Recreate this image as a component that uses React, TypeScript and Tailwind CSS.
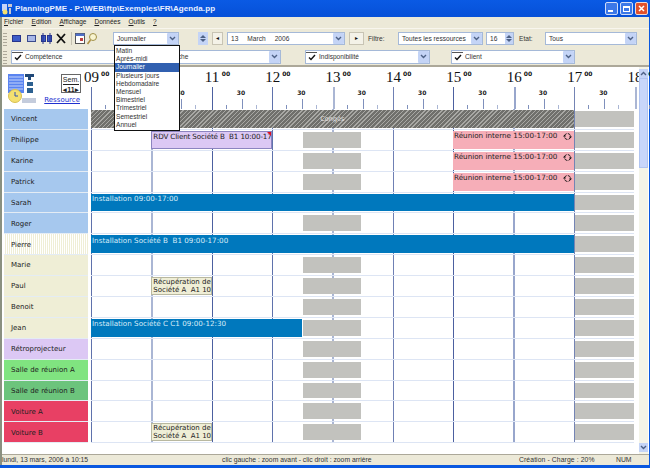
import type { ReactNode } from "react";

const hours = ["09", "10", "11", "12", "13", "14", "15", "16", "17", "18"];
const lineColors = ["border-l border-[#5f72ac]", "border-l-2 border-[#aab6d4]", "border-l border-[#4c60a0]", "border-l border-[#5f72ac]", "border-l-2 border-[#aab6d4]", "border-l border-[#6f80b4]", "border-l border-[#4c60a0]", "border-l-2 border-[#98a6cc]", "border-l border-[#7484b4]", "border-l-2 border-[#aab6d4]"];

type Ev = { from: number; to: number; kind: "hatch" | "blue" | "lilac" | "pink" | "cream"; text: string; text2?: string };

const resources: { name: string; color: string; events: Ev[]; noLunch?: boolean }[] = [
  { name: "Vincent", color: "bg-[#a6c8ee]", noLunch: true, events: [{ from: 0, to: 16, kind: "hatch", text: "Congés" }] },
  { name: "Philippe", color: "bg-[#a6c8ee]", events: [
    { from: 2, to: 6, kind: "lilac", text: "RDV Client Société B  B1 10:00-17:00" },
    { from: 12, to: 16, kind: "pink", text: "Réunion interne 15:00-17:00" },
  ] },
  { name: "Karine", color: "bg-[#a6c8ee]", events: [{ from: 12, to: 16, kind: "pink", text: "Réunion interne 15:00-17:00" }] },
  { name: "Patrick", color: "bg-[#a6c8ee]", events: [{ from: 12, to: 16, kind: "pink", text: "Réunion interne 15:00-17:00" }] },
  { name: "Sarah", color: "bg-[#a6c8ee]", noLunch: true, events: [{ from: 0, to: 16, kind: "blue", text: "Installation 09:00-17:00" }] },
  { name: "Roger", color: "bg-[#a6c8ee]", events: [] },
  { name: "Pierre", color: "bg-[repeating-linear-gradient(90deg,#ffffff_0,#ffffff_1px,#efeed6_1px,#efeed6_2px)]", noLunch: true, events: [{ from: 0, to: 16, kind: "blue", text: "Installation Société B  B1 09:00-17:00" }] },
  { name: "Marie", color: "bg-[#efeed6]", events: [] },
  { name: "Paul", color: "bg-[#efeed6]", events: [{ from: 2, to: 4, kind: "cream", text: "Récupération de", text2: "Société A  A1 10:00" }] },
  { name: "Benoit", color: "bg-[#efeed6]", events: [] },
  { name: "Jean", color: "bg-[#efeed6]", events: [{ from: 0, to: 7, kind: "blue", text: "Installation Société C C1 09:00-12:30" }] },
  { name: "Rétroprojecteur", color: "bg-[#dcc8f4]", events: [] },
  { name: "Salle de réunion A", color: "bg-[#80e480]", events: [] },
  { name: "Salle de réunion B", color: "bg-[#6cc47c]", events: [] },
  { name: "Voiture A", color: "bg-[#e84064]", events: [] },
  { name: "Voiture B", color: "bg-[#e84064]", events: [{ from: 2, to: 4, kind: "cream", text: "Récupération de", text2: "Société A  A1 10:00" }] },
];

const kinds = {
  hatch: "bg-[repeating-linear-gradient(135deg,#70706c_0,#70706c_2px,#a8a8a4_2px,#a8a8a4_3px)] text-[#e8e8e8] justify-center",
  blue: "bg-[#0078bd] text-[#d8ecf8]",
  lilac: "bg-[#dcc8f4] text-[#222] border border-[#8c84c0] tracking-[-0.15px]",
  pink: "bg-[#f6aeb8] text-[#222]",
  cream: "bg-[#efeed6] text-[#222] border border-[#b8b8a0]",
};

const menuItems = ["Fichier", "Edition", "Affichage", "Données", "Outils", "?"];
const dropdownItems = ["Matin", "Après-midi", "Journalier", "Plusieurs jours", "Hebdomadaire", "Mensuel", "Bimestriel", "Trimestriel", "Semestriel", "Annuel"];

function Arrow() {
  return (
    <span className="flex h-full w-[11px] shrink-0 items-center justify-center rounded-[1px] bg-[#c4d4f6]">
      <svg width="7" height="5" viewBox="0 0 7 5"><path d="M1 1l2.5 2.5L6 1" fill="none" stroke="#4d6185" strokeWidth="1.4" /></svg>
    </span>
  );
}

function Combo({ className, children }: { className: string; children: ReactNode }) {
  return (
    <div className={`flex items-center justify-between border border-[#a5b9d8] bg-white pl-[3px] text-[#333] ${className}`}>
      <span className="flex items-center gap-[2px] whitespace-nowrap">{children}</span>
      <Arrow />
    </div>
  );
}

function Check() {
  return (
    <span className="-ml-[3px] flex h-[10px] w-[11px] items-center justify-center border-t border-[#555]">
      <svg width="8" height="7" viewBox="0 0 8 7"><path d="M1 3.5l2 2L7 1" fill="none" stroke="#111" strokeWidth="1.4" /></svg>
    </span>
  );
}

function Grip() {
  return <span className="h-[14px] w-[4px] shrink-0 bg-[repeating-linear-gradient(0deg,#aca899_0,#aca899_1px,transparent_1px,transparent_3px)]" />;
}

function SpinArrows({ className }: { className: string }) {
  return (
    <span className={`flex flex-col items-center justify-center gap-[1px] bg-[#c4d4f6] ${className}`}>
      <span className="h-0 w-0 border-x-[3px] border-b-[3px] border-x-transparent border-b-[#4d6185]" />
      <span className="h-0 w-0 border-x-[3px] border-t-[3px] border-x-transparent border-t-[#4d6185]" />
    </span>
  );
}

function RecurIcon() {
  return (
    <svg width="9" height="9" viewBox="0 0 9 9" className="mr-[1px] shrink-0">
      <circle cx="4.5" cy="4.5" r="3" fill="none" stroke="#111" strokeWidth="0.9" strokeDasharray="3.5 1.2" />
      <path d="M6 4.5h3L7.5 6.2zM0 4.5h3L1.5 2.8z" fill="#111" />
    </svg>
  );
}

function ToolIcons() {
  return (
    <div className="ml-[5px] flex items-center">
      <svg width="86" height="14" viewBox="0 0 86 14">
        <rect x="0.5" y="3.5" width="8" height="6" fill="#3c5cc8" stroke="#27358c" />
        <rect x="15.5" y="3.5" width="8" height="6" fill="#a8b8e8" stroke="#3a4a8c" />
        <rect x="29.5" y="3.5" width="4" height="6" fill="#3c5cc8" stroke="#27358c" />
        <rect x="35.5" y="3.5" width="4" height="6" fill="#3c5cc8" stroke="#27358c" />
        <path d="M31 1v11M38 1v11" stroke="#27358c" />
        <path d="M45 2l8 9M53 2l-8 9" stroke="#111" strokeWidth="1.8" />
        <path d="M59.5 0v13" stroke="#c4c0b0" />
        <rect x="63.5" y="1.5" width="9" height="10" fill="#fff" stroke="#555" />
        <rect x="63.5" y="1.5" width="9" height="2.5" fill="#5070c8" />
        <rect x="68" y="6" width="3" height="3" fill="#c04040" />
        <circle cx="81" cy="5" r="3.5" fill="#f8f4d0" stroke="#a09048" />
        <path d="M78.5 8l-3 4" stroke="#b09040" strokeWidth="1.6" />
      </svg>
    </div>
  );
}

function Logo() {
  return (
    <svg width="29" height="30" viewBox="0 0 29 30" className="shrink-0">
      <rect x="1" y="0" width="16" height="19" fill="#5a84f0" />
      <path d="M2 3h14M2 6h14M2 9h14M2 12h14M2 15h14" stroke="#c4d4fa" />
      <rect x="15" y="24" width="14" height="5" fill="#c4ccdc" />
      <circle cx="8" cy="22" r="6.5" fill="#f4e070" stroke="#d8c050" />
      <path d="M8 18v4h3" stroke="#3050b0" fill="none" />
      <path d="M18 0h9v3h-3v3h-3v-3h-3z" fill="#204878" />
      <rect x="20" y="8" width="6" height="4" fill="#2c6090" />
      <rect x="20" y="14" width="6" height="5" fill="#2c6090" />
    </svg>
  );
}

function Ruler() {
  return (
    <div className="flex h-[42px] shrink-0">
      <div className="flex w-[89px] shrink-0 items-start pl-[5px] pt-[7px]">
        <Logo />
        <div className="ml-[6px] flex w-[39px] flex-col items-end">
          <div className="flex h-[19px] w-[20px] flex-col items-center border border-[#666] font-['Liberation_Sans',sans-serif] text-[7px] leading-[9px] text-[#222]">
            <span className="border-b border-[#222]">Sem.</span>
            <span className="font-bold">◂11▸</span>
          </div>
          <a className="mr-[1px] mt-[3px] font-['DejaVu_Sans',sans-serif] text-[7px] leading-[9px] text-[#2030d0] underline">Ressource</a>
        </div>
      </div>
      <div className="grid h-full w-[544px] grid-cols-[repeat(10,60.4px)]">
        {hours.map((h, i) => (
          <div key={h} className="relative">
            <span className="absolute -left-[7px] top-[3px] font-['Liberation_Serif',serif] text-[15px] leading-[15px] text-[#111]">{h}</span>
            <span className="absolute left-[10px] top-[3px] font-['DejaVu_Sans',sans-serif] text-[6px] font-bold leading-[8px] text-[#111]">00</span>
            <span className={`absolute bottom-0 left-0 h-[22px] ${lineColors[i]}`} />
            <span className="absolute left-[25px] top-[23px] font-['DejaVu_Sans',sans-serif] text-[6px] font-bold leading-[6px] text-[#222]">30</span>
            <span className="absolute bottom-0 left-[14px] h-[4px] border-l border-[#7f90bc]" />
            <span className="absolute bottom-0 left-[30px] h-[10px] border-l border-[#7f90bc]" />
            <span className="absolute bottom-0 left-[44px] h-[4px] border-l border-[#aab6d4]" />
          </div>
        ))}
      </div>
    </div>
  );
}

function Row({ r }: { r: (typeof resources)[number] }) {
  return (
    <div className="flex h-[20.9px] shrink-0">
      <div className={`ml-[2px] flex w-[84px] shrink-0 items-center border-b border-[#e4ecf4] pl-[7px] pt-[1px] font-['DejaVu_Sans',sans-serif] text-[7px] text-[#222] ${r.color}`}>
        {r.name}
      </div>
      <div className="ml-[3px] grid w-[543px] grid-cols-[repeat(18,1fr)] grid-rows-1 border-b border-[#dde5f4]">
        {hours.slice(0, 9).map((h, i) => (
          <div key={h} className={`col-span-2 row-start-1 ${lineColors[i]}`} style={{ gridColumnStart: i * 2 + 1 }} />
        ))}
        {!r.noLunch && <div className="col-start-8 col-end-10 row-start-1 my-[2px] ml-[1px] mr-[1px] bg-[#c2c2be]" />}
        <div className="col-start-17 col-end-19 row-start-1 my-[2px] ml-[1px] bg-[#c2c2be]" />
        {r.events.map((e) => (
          <div
            key={e.text}
            className={`relative z-10 row-start-1 my-[1px] flex overflow-hidden px-[1px] font-['DejaVu_Sans',sans-serif] text-[7.2px] leading-[8px] ${kinds[e.kind]}`}
            style={{ gridColumn: `${e.from + 1} / ${e.to + 1}` }}
          >
            {e.kind === "hatch" ? (
              <span className="mt-[5px] text-[6.5px]">{e.text}</span>
            ) : e.text2 ? (
              <span className="whitespace-pre text-[7px]">{e.text}{"\n"}{e.text2}</span>
            ) : (
              <span className="flex h-[9px] w-full items-center justify-between gap-[1px] whitespace-pre pt-[2px]">
                {e.text}
                {e.kind === "pink" && <RecurIcon />}
              </span>
            )}
            {e.kind === "lilac" && (
              <span className="absolute right-0 top-0 h-0 w-0 border-l-[4px] border-t-[4px] border-l-transparent border-t-[#e01020]" />
            )}
          </div>
        ))}
      </div>
    </div>
  );
}

function Scrollbar() {
  return (
    <div className="relative z-20 ml-[3px] flex w-[9px] shrink-0 flex-col bg-[#f4f4e8]">
      <span className="mt-[2px] flex h-[9px] items-center justify-center bg-[#c4d4f6]">
        <svg width="7" height="5" viewBox="0 0 7 5"><path d="M1 4l2.5-2.5L6 4" fill="none" stroke="#4d6185" strokeWidth="1.4" /></svg>
      </span>
      <span className="h-[90px] border border-[#b0c4f0] bg-[#c8d6fa]" />
      <span className="flex-1" />
      <span className="mb-[2px] flex h-[9px] items-center justify-center bg-[#c4d4f6]">
        <svg width="7" height="5" viewBox="0 0 7 5"><path d="M1 1l2.5 2.5L6 1" fill="none" stroke="#4d6185" strokeWidth="1.4" /></svg>
      </span>
    </div>
  );
}

export default function App() {
  return (
    <div className="relative flex h-[468px] w-[650px] flex-col overflow-hidden bg-[#0a58e0] font-['Liberation_Sans',sans-serif]">
      {/* Title bar */}
      <div className="flex h-[17px] shrink-0 items-center justify-between bg-gradient-to-b from-[#0a5ae4] to-[#0650d8] pl-[2px] pr-[2px]">
        <div className="flex items-center gap-[3px]">
          <svg width="10" height="12" viewBox="0 0 10 12">
            <rect x="0" y="1" width="5" height="7" fill="#c4d4fa" />
            <rect x="6" y="1" width="4" height="3" fill="#c8c8d0" />
            <rect x="7" y="5" width="2" height="6" fill="#c8c8d0" />
            <circle cx="3" cy="9" r="2.5" fill="#f4e070" />
          </svg>
          <span className="text-[8px] font-bold leading-none tracking-[0.1px] text-[#e8f0ff]">PlanningPME - P:\WEB\ftp\Exemples\FR\Agenda.pp</span>
        </div>
        <div className="flex gap-[2px]">
          <span className="flex h-[13px] w-[13px] items-end justify-start rounded-[2px] border border-[#d0dcf8] bg-[#3c78e8] pb-[2px] pl-[2px]"><span className="h-[2px] w-[5px] bg-white" /></span>
          <span className="flex h-[13px] w-[13px] items-center justify-center rounded-[2px] border border-[#d0dcf8] bg-[#3c78e8]"><span className="h-[6px] w-[7px] border border-t-2 border-white" /></span>
          <span className="flex h-[13px] w-[13px] items-center justify-center rounded-[2px] border border-[#f0d8d0] bg-[#e0502c]">
            <svg width="7" height="7" viewBox="0 0 7 7"><path d="M1 1l5 5M6 1L1 6" stroke="#fff" strokeWidth="1.5" /></svg>
          </span>
        </div>
      </div>

      {/* Window body */}
      <div className="mr-[1px] flex min-h-0 flex-1 flex-col border-l-2 border-[#8a9080] bg-[#ece9d8]">
        <div className="flex h-[11px] shrink-0 items-center gap-[8px] pl-[2px] text-[6.5px] leading-none text-[#222]">
          {menuItems.map((m) => (
            <span key={m}><span className="underline">{m[0]}</span>{m.slice(1)}</span>
          ))}
        </div>

        {/* Toolbar 1 */}
        <div className="flex h-[20px] shrink-0 items-center border-t border-[#f8f6ee] pl-[1px] text-[6.6px] text-[#333]">
          <Grip />
          <ToolIcons />
          <span className="ml-[10px]"><Grip /></span>
          <Combo className="ml-[5px] h-[13px] w-[66px]">Journalier</Combo>
          <SpinArrows className="ml-[19px] h-[13px] w-[10px]" />
          <span className="ml-[4px] flex h-[13px] w-[11px] items-center justify-center border border-[#c8c4b4] bg-[#f4f2e8] text-[6px] text-[#111]">◂</span>
          <Combo className="ml-[4px] h-[13px] w-[118px]">
            <span className="flex gap-[9px]"><span>13</span><span>March</span><span>2006</span></span>
          </Combo>
          <span className="ml-[4px] flex h-[13px] w-[15px] items-center justify-center border border-[#c8c4b4] bg-[#f4f2e8] text-[6px] text-[#111]">▸</span>
          <span className="ml-[4px] w-[30px]">Filtre:</span>
          <Combo className="h-[13px] w-[85px]">Toutes les ressources</Combo>
          <div className="ml-[3px] flex h-[13px] w-[28px] items-center justify-between border border-[#a5b9d8] bg-white pl-[3px]">
            16
            <SpinArrows className="h-full w-[8px]" />
          </div>
          <span className="ml-[5px] w-[26px]">Etat:</span>
          <Combo className="h-[13px] w-[92px]">Tous</Combo>
        </div>

        {/* Toolbar 2 */}
        <div className="flex h-[19px] shrink-0 items-center border-b-2 border-[#aca899] pl-[1px] text-[6.6px] text-[#333]">
          <Grip />
          <Combo className="ml-[4px] h-[14px] w-[125px]"><Check />Compétence</Combo>
          <Combo className="ml-[20px] h-[14px] w-[125px]"><Check />Tâche</Combo>
          <Combo className="ml-[24px] h-[14px] w-[125px]"><Check />Indisponibilité</Combo>
          <Combo className="ml-[21px] h-[14px] w-[124px]"><Check />Client</Combo>
        </div>

        {/* Planning */}
        <div className="flex min-h-0 flex-1 bg-white">
          <div className="flex w-[634px] shrink-0 flex-col">
            <Ruler />
            {resources.map((r) => (
              <Row key={r.name} r={r} />
            ))}
          </div>
          <Scrollbar />
        </div>

        {/* Status bar */}
        <div className="flex h-[11px] shrink-0 items-center border-t border-[#aca899] text-[6.8px] leading-none text-[#333]">
          <span className="w-[220px]">lundi, 13 mars, 2006 à 10:15</span>
          <span className="w-[297px]">clic gauche : zoom avant - clic droit : zoom arrière</span>
          <span className="w-[97px] tracking-[0.1px]">Création - Charge : 20%</span>
          <span>NUM</span>
        </div>
      </div>
      <div className="h-[3px] shrink-0" />

      {/* Open dropdown */}
      <div className="absolute left-[114px] top-[45px] z-30 flex w-[66px] flex-col border border-[#111] bg-white py-[1px] text-[6.6px] leading-[8.2px] text-[#333]">
        {dropdownItems.map((d) => (
          <div key={d} className={d === "Journalier" ? "bg-[#3160b0] pl-[1px] text-white" : "pl-[1px]"}>{d}</div>
        ))}
      </div>
    </div>
  );
}
